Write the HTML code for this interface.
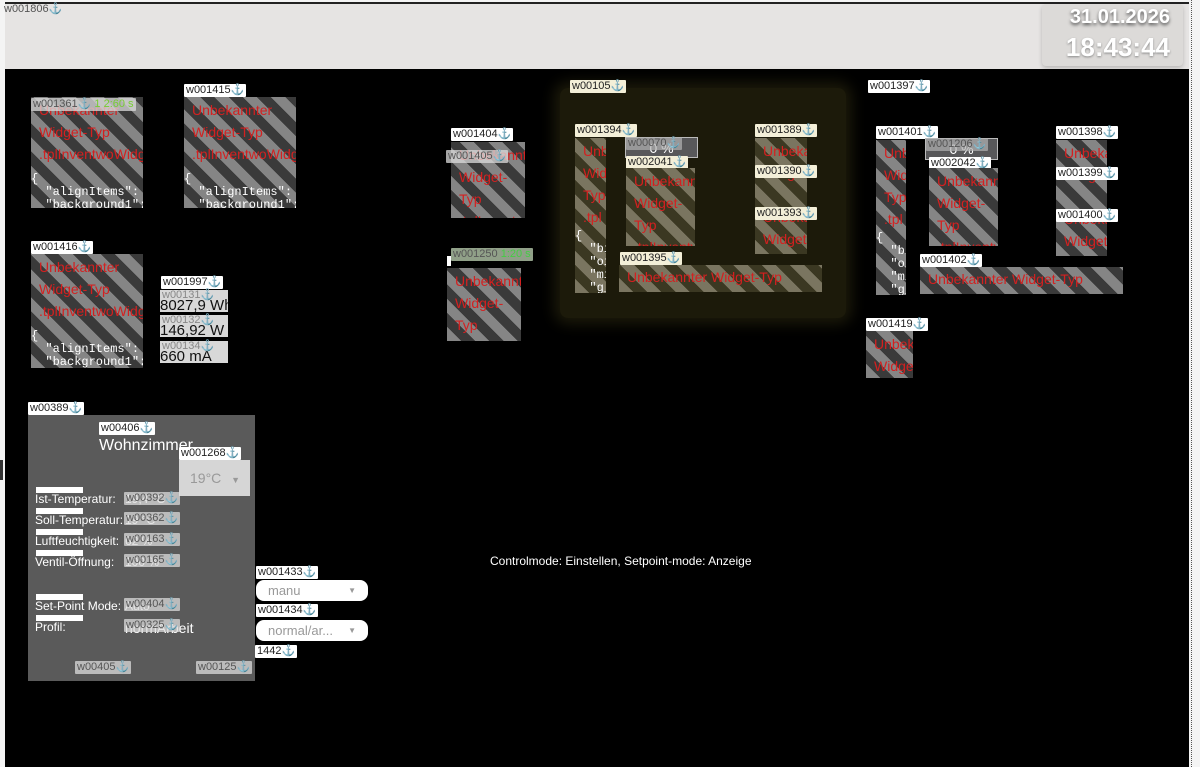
<!DOCTYPE html>
<html><head><meta charset="utf-8"><style>
*{margin:0;padding:0;box-sizing:border-box}
body{width:1200px;height:767px;overflow:hidden;background:#f4f4f4;font-family:"Liberation Sans",sans-serif;position:relative}
.a{position:absolute}
.lbl{position:absolute;background:#fff;color:#222;font-size:11px;height:13px;line-height:13px;padding:0 2px;white-space:nowrap;border-radius:1px}
.lbl.g{background:rgba(220,220,220,.75);color:#555}
.lbl.y{background:#f3efd8}
.st{position:absolute;overflow:hidden;background:repeating-linear-gradient(45deg,#858585 0 10px,#3a3a3a 10px 20px);color:#d42020;font-size:14px;line-height:22px;padding:2px 0 0 8px;white-space:nowrap}
.st.o{background:repeating-linear-gradient(45deg,#7a7560 0 10px,#3b3822 10px 20px)}
.mono{font-family:"Liberation Mono",monospace;color:#fff;font-size:12px;line-height:13px;white-space:pre;padding:0;margin-left:-8px}
.val{position:absolute;background:#d8d8d8;color:#111;font-size:15px;line-height:15px;padding-top:8px;padding-left:0;white-space:nowrap;overflow:hidden}
.w{color:#fff;font-size:12px;position:absolute;white-space:nowrap}
.bar{position:absolute;background:#fff;height:6px;width:47px}
</style></head><body>
<div class="a" style="left:5px;top:2px;width:1184px;height:2px;background:#222"></div>
<div class="a" style="left:5px;top:4px;width:1184px;height:65px;background:#e6e4e3"></div>
<div class="a" style="left:5px;top:69px;width:1184px;height:698px;background:#000"></div>
<div class="a" style="left:1191px;top:0;width:1px;height:767px;border-left:1px dotted #555"></div>
<div class="a" style="left:0;top:460px;width:3px;height:20px;background:#333"></div>
<div class="lbl g" style="left:2px;top:3px;background:transparent">w001806⚓</div>
<div class="a" style="left:1042px;top:4px;width:141px;height:62px;background:#dcdad8;border-radius:4px;box-shadow:0 2px 4px rgba(0,0,0,.2)"></div>
<div class="a" style="left:1050px;top:6px;width:120px;text-align:right;color:#fff;font-weight:bold;font-size:20px;text-shadow:0 2px 3px #555">31.01.2026</div>
<div class="a" style="left:1046px;top:32px;width:124px;text-align:right;color:#fff;font-weight:bold;font-size:26px;text-shadow:0 1px 2px #888">18:43:44</div>

<div class="st" style="left:31px;top:97px;width:112px;height:111px">Unbekannter<br>Widget-Typ<br>.tplInventwoWidget<div class="mono" style="margin-top:8px">{
  "alignItems": "c
  "background1": "
  "background2": "</div></div>
<div class="lbl g" style="left:31px;top:98px">w001361⚓ <span style="color:#7c3">1 2:60 s</span></div>
<div class="lbl" style="left:184px;top:84px">w001415⚓</div>
<div class="st" style="left:184px;top:97px;width:112px;height:111px">Unbekannter<br>Widget-Typ<br>.tplInventwoWidget<div class="mono" style="margin-top:8px">{
  "alignItems": "c
  "background1": "
  "background2": "</div></div>
<div class="lbl" style="left:31px;top:241px">w001416⚓</div>
<div class="st" style="left:31px;top:254px;width:112px;height:114px">Unbekannter<br>Widget-Typ<br>.tplInventwoWidget<div class="mono" style="margin-top:8px">{
  "alignItems": "c
  "background1": "
  "background2": "</div></div>
<div class="lbl" style="left:161px;top:276px">w001997⚓</div>
<div class="val" style="left:160px;top:290px;width:68px;height:22px">8027,9 Wh</div>
<div class="lbl g" style="left:160px;top:289px;background:transparent;color:#888">w00131⚓</div>
<div class="val" style="left:160px;top:315px;width:68px;height:22px">146,92 W</div>
<div class="lbl g" style="left:160px;top:314px;background:transparent;color:#888">w00132⚓</div>
<div class="val" style="left:160px;top:341px;width:68px;height:22px">660 mA</div>
<div class="lbl g" style="left:160px;top:340px;background:transparent;color:#888">w00134⚓</div>

<div class="lbl" style="left:451px;top:128px">w001404⚓</div>
<div class="st" style="left:451px;top:142px;width:74px;height:76px">Unbekannter<br>Widget-<br>Typ<br>.tplInventwo</div>
<div class="lbl g" style="left:446px;top:150px">w001405⚓</div>
<div class="st" style="left:447px;top:268px;width:74px;height:73px">Unbekannter<br>Widget-<br>Typ<br>.tplInventwo</div>
<div class="lbl g" style="left:451px;top:248px;background:rgba(180,200,170,.8)">w001250 <span style="color:#4c4">1:20 s</span></div>
<div class="a" style="left:447px;top:256px;width:4px;height:10px;background:#fff"></div>

<div class="a" style="left:560px;top:88px;width:286px;height:230px;background:#1c1a0a;border-radius:8px;box-shadow:0 0 14px 6px #1c1a0a"></div>
<div class="lbl y" style="left:570px;top:80px">w00105⚓</div>
<div class="lbl y" style="left:575px;top:124px">w001394⚓</div>
<div class="st o" style="left:575px;top:138px;width:31px;height:155px">Unbekannter<br>Widget-<br>Typ<br>.tpl<div class="mono" style="margin-top:2px">{
  "bi
  "oi
  "mi
  "g_</div></div>
<div class="a" style="left:625px;top:137px;width:73px;height:21px;background:#58585a;border:1px solid #bbb;color:#fff;font-size:14px;text-align:center;line-height:20px">0 %</div>
<div class="lbl g" style="left:626px;top:137px;background:rgba(180,180,180,.7)">w00070⚓</div>
<div class="lbl y" style="left:626px;top:156px">w002041⚓</div>
<div class="st o" style="left:626px;top:168px;width:69px;height:78px">Unbekannter<br>Widget-<br>Typ<br>.tplInventwo</div>
<div class="st o" style="left:755px;top:138px;width:52px;height:116px">Unbekannter<br>Widget<br><br>Unbekannter<br>Widget</div>
<div class="lbl y" style="left:755px;top:124px">w001389⚓</div>
<div class="lbl y" style="left:755px;top:165px">w001390⚓</div>
<div class="lbl y" style="left:755px;top:207px">w001393⚓</div>
<div class="lbl y" style="left:620px;top:252px">w001395⚓</div>
<div class="st o" style="left:619px;top:265px;width:203px;height:27px;line-height:20px">Unbekannter Widget-Typ<br>.tplInventwoWidgetUniversal</div>

<div class="lbl" style="left:868px;top:80px">w001397⚓</div>
<div class="lbl" style="left:876px;top:126px">w001401⚓</div>
<div class="st" style="left:876px;top:140px;width:30px;height:155px">Unbekannter<br>Widget-<br>Typ<br>.tpl<div class="mono" style="margin-top:2px">{
  "bi
  "oi
  "mi
  "g_</div></div>
<div class="a" style="left:925px;top:138px;width:73px;height:22px;background:#58585a;border:1px solid #bbb;color:#fff;font-size:14px;text-align:center;line-height:20px">0 %</div>
<div class="lbl g" style="left:926px;top:138px;background:rgba(180,180,180,.7)">w001206⚓</div>
<div class="lbl" style="left:929px;top:157px">w002042⚓</div>
<div class="st" style="left:929px;top:168px;width:69px;height:78px">Unbekannter<br>Widget-<br>Typ<br>.tplInventwo</div>
<div class="st" style="left:1056px;top:140px;width:51px;height:116px">Unbekannter<br>Widget<br><br>Unbekannter<br>Widget</div>
<div class="lbl" style="left:1056px;top:126px">w001398⚓</div>
<div class="lbl" style="left:1056px;top:167px">w001399⚓</div>
<div class="lbl" style="left:1056px;top:209px">w001400⚓</div>
<div class="lbl" style="left:920px;top:254px">w001402⚓</div>
<div class="st" style="left:920px;top:267px;width:203px;height:27px;line-height:20px">Unbekannter Widget-Typ<br>.tplInventwoWidgetUniversal</div>
<div class="lbl" style="left:866px;top:318px">w001419⚓</div>
<div class="st" style="left:866px;top:331px;width:47px;height:47px">Unbekannter<br>Widget<br>Typ</div>

<div class="lbl" style="left:28px;top:402px">w00389⚓</div>
<div class="a" style="left:28px;top:415px;width:227px;height:266px;background:#5a5a5a"></div>
<div class="lbl" style="left:99px;top:422px">w00406⚓</div>
<div class="w" style="left:99px;top:437px;font-size:16px">Wohnzimmer</div>
<div class="a" style="left:179px;top:460px;width:71px;height:36px;background:#d6d6d6;color:#999;font-size:14px;line-height:36px;padding-left:11px">19°C <span style="font-size:9px;margin-left:6px">▼</span></div>
<div class="lbl" style="left:179px;top:447px">w001268⚓</div>
<div class="bar" style="left:36px;top:487px"></div><div class="w" style="left:35px;top:492px">Ist-Temperatur:</div><div class="w" style="left:125px;top:492px">19,4 °C</div><div class="lbl g" style="left:124px;top:492px">w00392⚓</div>
<div class="bar" style="left:36px;top:508px"></div><div class="w" style="left:35px;top:513px">Soll-Temperatur:</div><div class="w" style="left:125px;top:513px">19 °C</div><div class="lbl g" style="left:124px;top:512px">w00362⚓</div>
<div class="bar" style="left:36px;top:529px"></div><div class="w" style="left:35px;top:534px">Luftfeuchtigkeit:</div><div class="w" style="left:125px;top:534px">62 %</div><div class="lbl g" style="left:124px;top:533px">w00163⚓</div>
<div class="bar" style="left:36px;top:550px"></div><div class="w" style="left:35px;top:555px">Ventil-Öffnung:</div><div class="w" style="left:125px;top:555px">100 %</div><div class="lbl g" style="left:124px;top:554px">w00165⚓</div>
<div class="bar" style="left:36px;top:594px"></div><div class="w" style="left:35px;top:599px">Set-Point Mode:</div><div class="w" style="left:125px;top:599px">Auto</div><div class="lbl g" style="left:124px;top:598px">w00404⚓</div>
<div class="bar" style="left:36px;top:615px"></div><div class="w" style="left:35px;top:620px">Profil:</div><div class="w" style="left:125px;top:620px;font-size:14px">normArbeit</div><div class="lbl g" style="left:124px;top:619px">w00325⚓</div>
<div class="lbl g" style="left:75px;top:661px">w00405⚓</div>
<div class="lbl g" style="left:196px;top:661px">w00125⚓</div>

<div class="lbl" style="left:256px;top:566px">w001433⚓</div>
<div class="a" style="left:256px;top:580px;width:112px;height:21px;background:#fff;border-radius:8px;color:#999;font-size:13px;line-height:21px;padding-left:12px">manu<span style="position:absolute;right:12px;font-size:8px">▼</span></div>
<div class="lbl" style="left:256px;top:604px">w001434⚓</div>
<div class="a" style="left:256px;top:620px;width:112px;height:21px;background:#fff;border-radius:8px;color:#999;font-size:13px;line-height:21px;padding-left:12px">normal/ar...<span style="position:absolute;right:12px;font-size:8px">▼</span></div>
<div class="lbl" style="left:255px;top:645px">1442⚓</div>
<div class="w" style="left:490px;top:554px">Controlmode: Einstellen, Setpoint-mode: Anzeige</div>
</body></html>
